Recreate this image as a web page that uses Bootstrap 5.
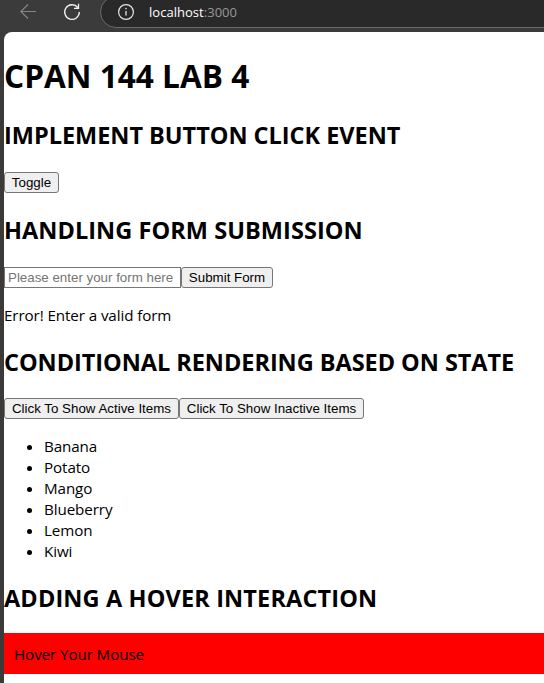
<!DOCTYPE html>
<html lang="en">
<head>
<meta charset="utf-8">
<title>CPAN 144 LAB 4</title>
<link href="https://cdn.jsdelivr.net/npm/bootstrap@5.3.0/dist/css/bootstrap.min.css" rel="stylesheet">
<style>
body{background:#3b3a39;color:#000;font:15.2px/21px "Open Sans","Noto Sans",sans-serif;letter-spacing:-.1px;height:683px}
.toolbar{height:32px;background:#3b3b3b;padding-left:20px}
.toolbar svg{display:block;flex:none}
.reload{margin-left:26px}
.address{height:32px;margin:-4px -20px 0 19px;padding-left:16px;background:#292929;border:1px solid #6a6a6a;border-radius:16px;color:#fff;font-size:13px}
.address .host{margin-left:14px;letter-spacing:.03px}
.port{color:#979797}
.page{margin-left:4px;height:651px;border-top-left-radius:8px}
h1{font-size:31.6px;line-height:43px;margin:0 0 22px;padding-top:22px;font-weight:700;white-space:nowrap;letter-spacing:0}
h2{font-size:23.5px;line-height:32px;margin:0 0 21px;font-weight:700;white-space:nowrap;letter-spacing:-.02px}
.events{margin-bottom:21px}
.rendering h2{margin-bottom:20px;letter-spacing:-.04px}
.hovering h2{margin-bottom:19px;letter-spacing:.14px}
.submission h2{letter-spacing:.06px}
.plain-btn,.plain-input{font:13.333px/15px "Liberation Sans",Arial,sans-serif;letter-spacing:normal;height:21px;border:1px solid #767676;color:#000}
.plain-btn{background:#efefef;border-radius:3px;padding:1px 0;text-align:center}
.plain-input{width:177px;padding:1px 3px;border-radius:0;background:#fff}
.plain-input::placeholder{color:#757575;opacity:1}
.message{margin:17px 0 20px}
.fruit{padding-left:40px;margin:17px 0 20px}
.hover-box{background:red;height:41px;padding:11px 10px 9px}
.w-toggle{width:55px}.w-submit{width:92px}.w-active{width:175px}.w-inactive{width:185px}
</style>
<script src="https://cdn.jsdelivr.net/npm/bootstrap@5.3.0/dist/js/bootstrap.bundle.min.js"></script>
</head>
<body class="overflow-hidden">
<header class="toolbar d-flex overflow-hidden">
  <svg width="17" height="24" fill="none" stroke="#858585" stroke-width="1.1"><path d="M16 11.5H1M8 4.5L.8 11.5L8 18.5"/></svg>
  <svg class="reload" width="18" height="24" fill="none" stroke="#f2f2f2" stroke-width="1.3"><path d="M14.7 7.5A7.3 7.3 0 1 0 16.3 12M15.5 3.8V8.3H11"/></svg>
  <div class="address d-flex align-items-center flex-grow-1">
    <svg width="18" height="18" fill="none" stroke="#e5e5e5" stroke-width="1.2"><circle cx="9" cy="9" r="7.4"/><path d="M9 8V12.5" stroke-width="1.3"/><circle cx="9" cy="5.6" r=".8" fill="#e5e5e5" stroke="none"/></svg>
    <span class="host">localhost<span class="port">:3000</span></span>
  </div>
</header>
<main class="page bg-white">
  <h1>CPAN 144 LAB 4</h1>
  <section class="events"><h2>IMPLEMENT BUTTON CLICK EVENT</h2>
    <div class="d-flex"><button class="plain-btn w-toggle">Toggle</button></div></section>
  <section class="submission"><h2>HANDLING FORM SUBMISSION</h2>
    <form class="d-flex"><input class="plain-input" placeholder="Please enter your form here"><button type="button" class="plain-btn w-submit">Submit Form</button></form>
    <p class="message">Error! Enter a valid form</p></section>
  <section class="rendering"><h2>CONDITIONAL RENDERING BASED ON STATE</h2>
    <div class="d-flex"><button class="plain-btn w-active">Click To Show Active Items</button><button class="plain-btn w-inactive">Click To Show Inactive Items</button></div>
    <ul class="fruit"><li>Banana</li><li>Potato</li><li>Mango</li><li>Blueberry</li><li>Lemon</li><li>Kiwi</li></ul></section>
  <section class="hovering"><h2>ADDING A HOVER INTERACTION</h2>
    <div class="hover-box">Hover Your Mouse</div></section>
</main>
</body>
</html>
